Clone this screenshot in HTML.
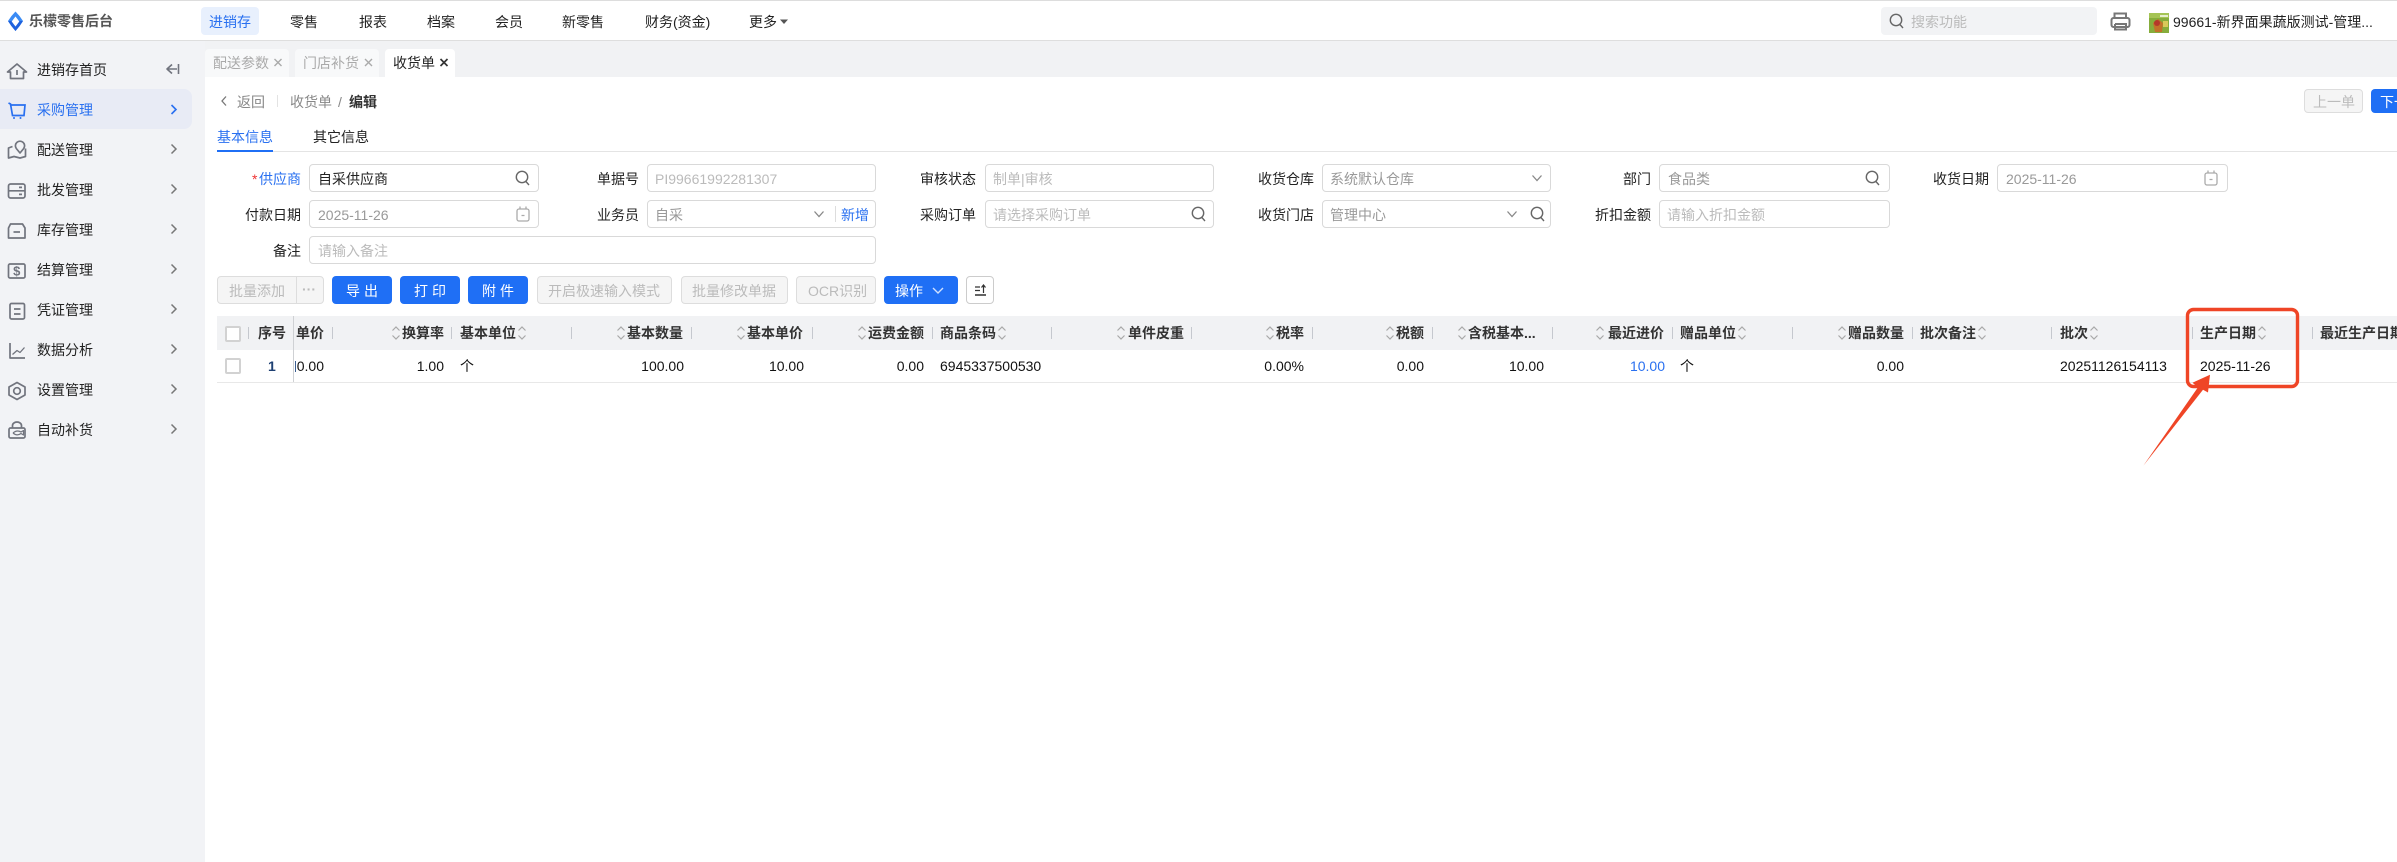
<!DOCTYPE html>
<html lang="zh-CN"><head><meta charset="utf-8"><title>收货单</title>
<style>
html,body{margin:0;padding:0;width:2397px;height:862px;overflow:hidden;background:#fff}
body{position:relative;font-family:"Liberation Sans","Noto Sans CJK SC",sans-serif;font-size:14px;color:#222}
.b{position:absolute;box-sizing:border-box}
.t{position:absolute;white-space:nowrap;line-height:20px;font-size:14px}
.r{transform:translateX(-100%)}
.i{position:absolute;box-sizing:border-box;background:#fff;border:1px solid #d9d9d9;border-radius:4px;height:28px}
.p{color:#bbb}.d{color:#999}.l{color:#2970f0}
.h{font-weight:bold;color:#333;top:323px}
.c{top:356px;color:#111}
.btn{position:absolute;box-sizing:border-box;top:276px;height:28px;border-radius:4px}
.off{background:#f5f5f5;border:1px solid #ddd}
.on{background:#1f6ff5}
.w{color:#fff}
.s{position:absolute;top:327px;width:1px;height:12px;background:#c5c8ce}
svg.o{position:absolute;left:0;top:0}
</style></head><body>
<!-- frame -->
<div class="b" style="left:0;top:0;width:2397px;height:1px;background:#ddd"></div>
<div class="b" style="left:0;top:40px;width:2397px;height:37px;background:#f1f2f4;border-top:1px solid #dedede"></div>
<div class="b" style="left:0;top:41px;width:205px;height:821px;background:#f2f3f6"></div>
<div class="b" style="left:0;top:89px;width:192px;height:40px;background:#e8ebf5;border-radius:0 8px 8px 0"></div>
<!-- header -->
<div class="t" style="left:29px;top:11px;font-weight:bold;color:#555">乐檬零售后台</div>
<div class="b" style="left:201px;top:7px;width:58px;height:28px;background:#e8f0fd;border-radius:4px"></div>
<div class="t l" style="left:209px;top:12px">进销存</div>
<div class="t" style="left:290px;top:12px">零售</div>
<div class="t" style="left:359px;top:12px">报表</div>
<div class="t" style="left:427px;top:12px">档案</div>
<div class="t" style="left:495px;top:12px">会员</div>
<div class="t" style="left:562px;top:12px">新零售</div>
<div class="t" style="left:645px;top:12px">财务(资金)</div>
<div class="t" style="left:749px;top:12px">更多</div>
<div class="b" style="left:1881px;top:7px;width:216px;height:28px;background:#f2f3f5;border-radius:4px"></div>
<div class="t p" style="left:1911px;top:12px">搜索功能</div>
<div class="t" style="left:2173px;top:12px">99661-新界面果蔬版测试-管理...</div>
<!-- sidebar -->
<div class="t" style="left:37px;top:60px">进销存首页</div>
<div class="t l" style="left:37px;top:100px">采购管理</div>
<div class="t" style="left:37px;top:140px">配送管理</div>
<div class="t" style="left:37px;top:180px">批发管理</div>
<div class="t" style="left:37px;top:220px">库存管理</div>
<div class="t" style="left:37px;top:260px">结算管理</div>
<div class="t" style="left:37px;top:300px">凭证管理</div>
<div class="t" style="left:37px;top:340px">数据分析</div>
<div class="t" style="left:37px;top:380px">设置管理</div>
<div class="t" style="left:37px;top:420px">自动补货</div>
<!-- tabs -->
<div class="b" style="left:205px;top:49px;width:84px;height:28px;background:#f8f9fa;border-radius:4px 4px 0 0"></div>
<div class="b" style="left:295px;top:49px;width:84px;height:28px;background:#f8f9fa;border-radius:4px 4px 0 0"></div>
<div class="b" style="left:385px;top:49px;width:70px;height:28px;background:#fff;border-radius:4px 4px 0 0"></div>
<div class="t" style="left:213px;top:53px;color:#aaa">配送参数</div>
<div class="t" style="left:303px;top:53px;color:#aaa">门店补货</div>
<div class="t" style="left:393px;top:53px;color:#222">收货单</div>
<!-- breadcrumb -->
<div class="t" style="left:237px;top:92px;color:#888">返回</div>
<div class="b" style="left:277px;top:95px;width:1px;height:12px;background:#e3e3e3"></div>
<div class="t" style="left:290px;top:92px;color:#888">收货单</div>
<div class="t" style="left:338px;top:92px;color:#888">/</div>
<div class="t" style="left:349px;top:92px;font-weight:bold;color:#333">编辑</div>
<div class="btn off" style="left:2304px;top:89px;width:59px;height:24px"></div>
<div class="t p" style="left:2313px;top:92px">上一单</div>
<div class="btn on" style="left:2371px;top:89px;width:40px;height:24px"></div>
<div class="t w" style="left:2380px;top:92px">下一单</div>
<!-- form tabs -->
<div class="b" style="left:217px;top:151px;width:2180px;height:1px;background:#e4e4e4"></div>
<div class="b" style="left:217px;top:150px;width:56px;height:2px;background:#1f6ff5"></div>
<div class="t l" style="left:217px;top:127px">基本信息</div>
<div class="t" style="left:313px;top:127px">其它信息</div>
<!-- inputs -->
<div class="i" style="left:309px;top:164px;width:230px"></div>
<div class="i" style="left:647px;top:164px;width:229px"></div>
<div class="i" style="left:985px;top:164px;width:229px"></div>
<div class="i" style="left:1322px;top:164px;width:229px"></div>
<div class="i" style="left:1659px;top:164px;width:231px"></div>
<div class="i" style="left:1997px;top:164px;width:231px"></div>
<div class="i" style="left:309px;top:200px;width:230px"></div>
<div class="i" style="left:647px;top:200px;width:229px"></div>
<div class="i" style="left:985px;top:200px;width:229px"></div>
<div class="i" style="left:1322px;top:200px;width:229px"></div>
<div class="i" style="left:1659px;top:200px;width:231px"></div>
<div class="i" style="left:309px;top:236px;width:567px"></div>
<!-- labels row 1 -->
<div class="t" style="left:252px;top:169px;color:#e33">*</div>
<div class="t l" style="left:259px;top:169px">供应商</div>
<div class="t" style="left:318px;top:169px">自采供应商</div>
<div class="t r" style="left:639px;top:169px">单据号</div>
<div class="t p" style="left:655px;top:169px">PI99661992281307</div>
<div class="t r" style="left:976px;top:169px">审核状态</div>
<div class="t p" style="left:993px;top:169px">制单|审核</div>
<div class="t r" style="left:1314px;top:169px">收货仓库</div>
<div class="t d" style="left:1330px;top:169px">系统默认仓库</div>
<div class="t r" style="left:1651px;top:169px">部门</div>
<div class="t d" style="left:1668px;top:169px">食品类</div>
<div class="t r" style="left:1989px;top:169px">收货日期</div>
<div class="t d" style="left:2006px;top:169px">2025-11-26</div>
<!-- labels row 2 -->
<div class="t r" style="left:301px;top:205px">付款日期</div>
<div class="t d" style="left:318px;top:205px">2025-11-26</div>
<div class="t r" style="left:639px;top:205px">业务员</div>
<div class="t d" style="left:655px;top:205px">自采</div>
<div class="b" style="left:835px;top:206px;width:1px;height:16px;background:#ddd"></div>
<div class="t l" style="left:841px;top:205px">新增</div>
<div class="t r" style="left:976px;top:205px">采购订单</div>
<div class="t p" style="left:993px;top:205px">请选择采购订单</div>
<div class="t r" style="left:1314px;top:205px">收货门店</div>
<div class="t d" style="left:1330px;top:205px">管理中心</div>
<div class="t r" style="left:1651px;top:205px">折扣金额</div>
<div class="t p" style="left:1667px;top:205px">请输入折扣金额</div>
<!-- row 3 -->
<div class="t r" style="left:301px;top:241px">备注</div>
<div class="t p" style="left:318px;top:241px">请输入备注</div>
<!-- toolbar -->
<div class="btn off" style="left:217px;width:107px"></div>
<div class="b" style="left:296px;top:277px;width:1px;height:26px;background:#ddd"></div>
<div class="t p" style="left:229px;top:281px">批量添加</div>
<div class="t p" style="left:302px;top:279px;font-weight:bold">···</div>
<div class="btn on" style="left:332px;width:60px"></div>
<div class="t w" style="left:346px;top:281px;letter-spacing:4px">导出</div>
<div class="btn on" style="left:400px;width:60px"></div>
<div class="t w" style="left:414px;top:281px;letter-spacing:4px">打印</div>
<div class="btn on" style="left:468px;width:60px"></div>
<div class="t w" style="left:482px;top:281px;letter-spacing:4px">附件</div>
<div class="btn off" style="left:537px;width:135px"></div>
<div class="t p" style="left:548px;top:281px">开启极速输入模式</div>
<div class="btn off" style="left:681px;width:107px"></div>
<div class="t p" style="left:692px;top:281px">批量修改单据</div>
<div class="btn off" style="left:796px;width:80px"></div>
<div class="t p" style="left:808px;top:281px">OCR识别</div>
<div class="btn on" style="left:884px;width:74px"></div>
<div class="t w" style="left:895px;top:281px">操作</div>
<div class="btn" style="left:966px;width:28px;background:#fff;border:1px solid #ccc"></div>
<!-- table -->
<div class="b" style="left:217px;top:316px;width:2180px;height:34px;background:#f1f2f4"></div>
<div class="b" style="left:217px;top:382px;width:2180px;height:1px;background:#e8e8e8"></div>
<div class="b" style="left:293px;top:316px;width:1px;height:66px;background:#cfd1d4"></div>
<div class="b" style="left:225px;top:326px;width:16px;height:16px;background:#fff;border:2px solid #d2d2d2;border-radius:2px"></div>
<div class="b" style="left:225px;top:358px;width:16px;height:16px;background:#fff;border:2px solid #d2d2d2;border-radius:2px"></div>
<div class="s" style="left:248px"></div><div class="s" style="left:332px"></div><div class="s" style="left:451px"></div><div class="s" style="left:571px"></div><div class="s" style="left:691px"></div><div class="s" style="left:812px"></div><div class="s" style="left:932px"></div><div class="s" style="left:1051px"></div><div class="s" style="left:1191px"></div><div class="s" style="left:1312px"></div><div class="s" style="left:1432px"></div><div class="s" style="left:1552px"></div><div class="s" style="left:1672px"></div><div class="s" style="left:1792px"></div><div class="s" style="left:1912px"></div><div class="s" style="left:2051px"></div><div class="s" style="left:2192px"></div><div class="s" style="left:2312px"></div>
<div class="t h" style="left:258px">序号</div>
<div class="t h" style="left:296px">单价</div>
<div class="t h" style="left:402px">换算率</div>
<div class="t h" style="left:460px">基本单位</div>
<div class="t h" style="left:627px">基本数量</div>
<div class="t h" style="left:747px">基本单价</div>
<div class="t h" style="left:868px">运费金额</div>
<div class="t h" style="left:940px">商品条码</div>
<div class="t h" style="left:1128px">单件皮重</div>
<div class="t h" style="left:1276px">税率</div>
<div class="t h" style="left:1396px">税额</div>
<div class="t h" style="left:1468px">含税基本...</div>
<div class="t h" style="left:1608px">最近进价</div>
<div class="t h" style="left:1680px">赠品单位</div>
<div class="t h" style="left:1848px">赠品数量</div>
<div class="t h" style="left:1920px">批次备注</div>
<div class="t h" style="left:2060px">批次</div>
<div class="t h" style="left:2200px">生产日期</div>
<div class="t h" style="left:2320px">最近生产日期</div>
<!-- row -->
<div class="t c" style="left:268px;font-weight:bold;color:#1d3f72">1</div>
<div class="b" style="left:294px;top:350px;width:1.5px;height:31px;overflow:hidden"></div>
<div class="b" style="left:295px;top:361px;width:1px;height:11px;background:#3b5f92"></div>
<div class="t c r" style="left:324px">0.00</div>
<div class="t c r" style="left:444px">1.00</div>
<div class="t c" style="left:460px">个</div>
<div class="t c r" style="left:684px">100.00</div>
<div class="t c r" style="left:804px">10.00</div>
<div class="t c r" style="left:924px">0.00</div>
<div class="t c" style="left:940px">6945337500530</div>
<div class="t c r" style="left:1304px">0.00%</div>
<div class="t c r" style="left:1424px">0.00</div>
<div class="t c r" style="left:1544px">10.00</div>
<div class="t c r l" style="left:1665px;color:#2970f0">10.00</div>
<div class="t c" style="left:1680px">个</div>
<div class="t c r" style="left:1904px">0.00</div>
<div class="t c" style="left:2060px">20251126154113</div>
<div class="t c" style="left:2200px">2025-11-26</div>
<!-- icons & annotation overlay -->
<svg class="o" width="2397" height="862" viewBox="0 0 2397 862" fill="none">
<defs>
<g id="so" stroke="#a8a8a8" stroke-width="1.2" fill="none"><path d="M-3.5 -2.5 L0 -6 L3.5 -2.5M-3.5 2.5 L0 6 L3.5 2.5"/></g>
<g id="se" stroke="#666" stroke-width="1.4" fill="none"><circle cx="0" cy="-1" r="5.7"/><path d="M3.8 3.4 L7 7"/></g>
<g id="ca" stroke="#aaa" stroke-width="1.3" fill="none"><rect x="-6" y="-5" width="12" height="12" rx="2"/><path d="M-3 -7.5V-5M3 -7.5V-5M-1.5 1.5H1.5"/></g>
<g id="ch" stroke="#888" stroke-width="1.3" fill="none"><path d="M-4.5 -2.5 L0 2.5 L4.5 -2.5"/></g>
<g id="cv" stroke="#777" stroke-width="1.5" fill="none"><path d="M-2.5 -4.5 L2 0 L-2.5 4.5"/></g>
</defs>
<!-- logo -->
<path d="M15.5 11.5 Q20 16 23 21 Q20 26 15.5 31 Q11 26 8 21 Q11 16 15.5 11.5Z" fill="#3a8bf5"/>
<path d="M8 21 Q11 26 15.5 31 Q20 26 23 21 L19.5 21 L15.5 26.5 L11.5 21Z" fill="#1f62dd"/>
<path d="M15.5 16.5 L19.3 21.5 L15.5 26.5 L11.7 21.5Z" fill="#fff"/>
<!-- more caret -->
<path d="M780 19.5H788L784 24Z" fill="#555"/>
<!-- search top -->
<use href="#se" x="1896" y="21"/>
<!-- printer -->
<g stroke="#777" stroke-width="2" fill="none"><path d="M2114.5 18V13.5H2126V18"/><rect x="2111.5" y="18" width="18" height="9" rx="2"/><path d="M2115 24V29.5H2126V24H2115"/></g>
<!-- avatar -->
<rect x="2149" y="13" width="20" height="20" fill="#86ad3c"/>
<rect x="2149" y="13" width="20" height="5" fill="#a5c455"/>
<path d="M2155 32L2153 23L2158 19L2163 23L2162 32Z" fill="#c2722a"/>
<circle cx="2157" cy="23" r="3" fill="#b5382a"/>
<rect x="2160" y="15" width="8" height="2" fill="#e8eecf"/>
<rect x="2163" y="21" width="5" height="6" fill="#d9c95a"/>
<!-- sidebar icons -->
<g stroke="#71747e" stroke-width="1.7" fill="none" stroke-linejoin="round">
<path d="M7.5 72L17 64L26.5 72H23.5V78.5H10.5V72Z"/><path d="M17 70V75"/>
<path d="M172 64.5L167 69L172 73.5M167 69H177M178.5 64V74" stroke-width="1.6"/>
<path d="M12.5 146.5L8.5 148V158L14 156.5L20 158L25.5 156.5V148.5"/><path d="M20 153L16.3 148.5A4.6 4.6 0 1 1 23.7 148.5Z"/>
<rect x="8.5" y="184" width="16.5" height="14" rx="2"/><path d="M8.5 190.8H25M19 187.4H22M19 194.4H22"/>
<path d="M10.5 224H22.5L25 228V238H8.5V228Z"/><path d="M13.5 232H20"/>
<rect x="8.5" y="264" width="16.5" height="14" rx="1.5"/>
<rect x="10" y="303.5" width="14.5" height="15.5" rx="1.5"/><path d="M14 309H20.5M14 314H20.5"/>
<path d="M10 343V358H25"/><path d="M12.5 354.5L17 350.5L20 352.5L24.5 347.5" stroke-width="1.3"/>
<path d="M17 382.5L25 387V395L17 399.5L9 395V387Z"/><circle cx="17" cy="391" r="3.3"/>
<rect x="9" y="428" width="16" height="10" rx="1.5"/><path d="M12.5 428V425.5A4.5 3.5 0 0 1 21.5 425.5V428"/><path d="M13 433Q17 429.5 21 432L23.5 430.5V435L21 433.5Q17 436.5 13 433" stroke-width="1.2"/>
</g>
<text x="16.8" y="275.5" text-anchor="middle" font-size="13" font-weight="bold" fill="#71747e" font-family="Liberation Sans, sans-serif">$</text>
<!-- cart -->
<g stroke="#2970f0" stroke-width="1.7" fill="none"><path d="M8.5 103L10.5 104L12.5 115.5H24L25 105H11"/></g>
<circle cx="14" cy="118" r="1" fill="#2970f0"/><circle cx="20.5" cy="118" r="1" fill="#2970f0"/>
<!-- chevrons -->
<path d="M171.5 105L176 109.5L171.5 114" stroke="#2970f0" stroke-width="1.6"/>
<use href="#cv" x="174" y="149"/><use href="#cv" x="174" y="189"/><use href="#cv" x="174" y="229"/><use href="#cv" x="174" y="269"/><use href="#cv" x="174" y="309"/><use href="#cv" x="174" y="349"/><use href="#cv" x="174" y="389"/><use href="#cv" x="174" y="429"/>
<!-- tab close -->
<g stroke="#aaa" stroke-width="1.4"><path d="M274.5 59L281.5 66M281.5 59L274.5 66M365 59L372 66M372 59L365 66"/></g>
<path d="M440.5 59L447.5 66M447.5 59L440.5 66" stroke="#333" stroke-width="1.7"/>
<!-- back -->
<path d="M226 96.5L222 101L226 105.5" stroke="#777" stroke-width="1.3"/>
<!-- input icons -->
<use href="#se" x="522" y="178"/><use href="#se" x="1872" y="178"/><use href="#se" x="1198" y="214"/><use href="#se" x="1537" y="214"/>
<use href="#ca" x="523" y="214"/><use href="#ca" x="2211" y="178"/>
<use href="#ch" x="819" y="214"/><use href="#ch" x="1537" y="178"/><use href="#ch" x="1512" y="214"/>
<!-- toolbar icons -->
<path d="M933 288L938 293L943 288" stroke="#cfe0ff" stroke-width="1.4"/>
<path d="M975 287H980M975 290.5H980M983.5 293V285.5M981.5 287.5L983.5 285L985.5 287.5" stroke="#333" stroke-width="1.2"/>
<path d="M975 295H986" stroke="#222" stroke-width="1.4"/>
<!-- sort arrows -->
<use href="#so" x="396" y="333"/><use href="#so" x="522" y="333"/><use href="#so" x="621" y="333"/><use href="#so" x="741" y="333"/><use href="#so" x="862" y="333"/><use href="#so" x="1002" y="333"/><use href="#so" x="1121" y="333"/><use href="#so" x="1270" y="333"/><use href="#so" x="1390" y="333"/><use href="#so" x="1462" y="333"/><use href="#so" x="1600" y="333"/><use href="#so" x="1742" y="333"/><use href="#so" x="1842" y="333"/><use href="#so" x="1982" y="333"/><use href="#so" x="2094" y="333"/><use href="#so" x="2262" y="333"/>
<!-- annotation -->
<rect x="2187.5" y="309.5" width="110" height="77" rx="6" stroke="#ef4526" stroke-width="3.4"/>
<path d="M2210 374.7L2192.5 382.7L2198 387.3L2143.3 465.7L2203 389.8L2208 392.5Z" fill="#ef4526"/>
</svg>
</body></html>
